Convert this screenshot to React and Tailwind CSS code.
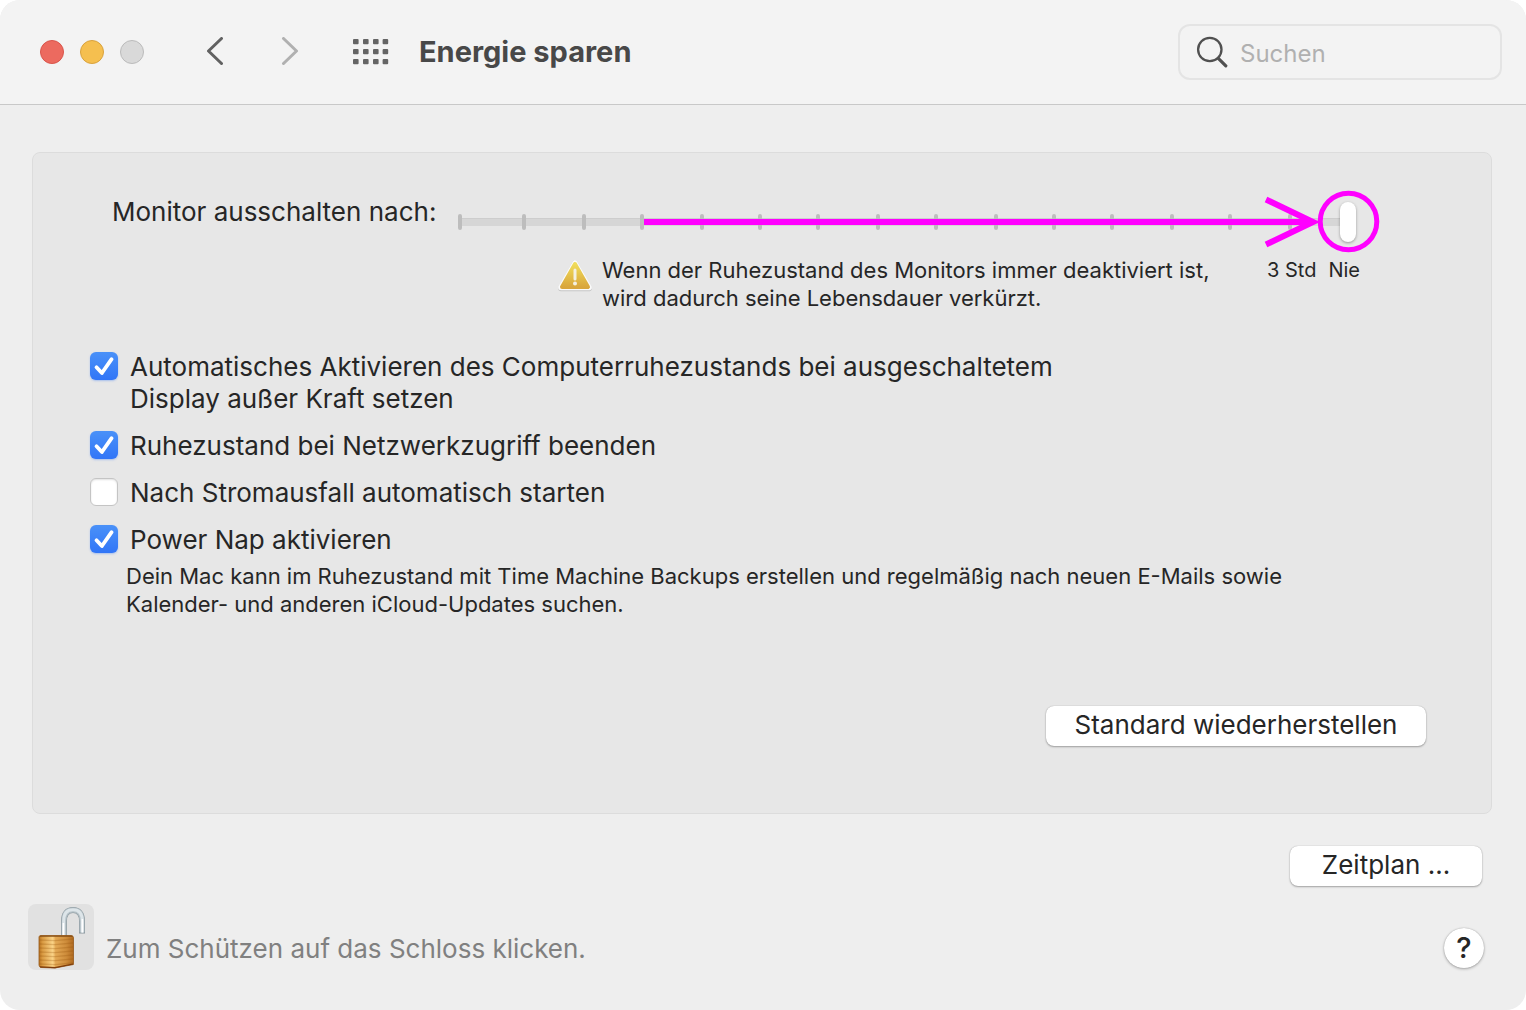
import { useState } from "react";

const TICKS = [2, 66, 126, 184, 244, 302, 360, 420, 478, 538, 596, 654, 714, 772, 832];

const BUTTON =
  "rounded-lg bg-white pb-0.5 text-[26px] leading-8 shadow-[0_0_1px_rgba(0,0,0,0.3),0_1px_2px_rgba(0,0,0,0.3)]";

function Check({ label, checked, onChange }) {
  return (
    <label className="flex items-start gap-3 text-[26px] leading-8">
      <span className="grid h-[30px] w-7 shrink-0 place-items-center">
        <input
          type="checkbox"
          checked={checked}
          onChange={onChange}
          className="peer col-start-1 row-start-1 size-7 appearance-none rounded-md border border-[#c4c4c4] bg-white shadow-[inset_0_1px_2px_rgba(0,0,0,0.12)] checked:border-0 checked:bg-linear-to-b checked:from-[#4a91f8] checked:to-[#3175f7] checked:shadow-[0_1px_2px_rgba(49,117,247,0.35)]"
        />
        <svg
          viewBox="0 0 28 28"
          className="pointer-events-none col-start-1 row-start-1 hidden size-7 peer-checked:block"
          fill="none"
          stroke="white"
          strokeWidth="3.8"
          strokeLinecap="round"
          strokeLinejoin="round"
          aria-hidden="true"
        >
          <path d="M6.5 15.3 L11.9 21 L21.6 7.2" />
        </svg>
      </span>
      <span className="whitespace-pre-line">{label}</span>
    </label>
  );
}

function Slider() {
  const [value, setValue] = useState(15);
  return (
    <div className="relative h-[60px] w-[898px] shrink-0">
      <svg className="absolute inset-0" width="898" height="60" aria-hidden="true">
        <rect x="0" y="26" width="898" height="8" rx="3" fill="#d6d6d6" />
        <rect x="0" y="26" width="898" height="1" fill="#cdcdcd" />
        {TICKS.map((x) => (
          <rect key={x} x={x - 2} y="22" width="4" height="16" rx="2" fill="#bdbdbd" />
        ))}
      </svg>
      <input
        id="display-off"
        type="range"
        min="0"
        max="15"
        value={value}
        onChange={(e) => setValue(Number(e.target.value))}
        className="absolute inset-0 h-full w-full appearance-none bg-transparent [&::-webkit-slider-thumb]:h-10 [&::-webkit-slider-thumb]:w-4 [&::-webkit-slider-thumb]:appearance-none [&::-webkit-slider-thumb]:rounded-full [&::-webkit-slider-thumb]:bg-white [&::-webkit-slider-thumb]:shadow-[0_1px_3px_rgba(0,0,0,0.35)]"
      />
      <svg
        className="pointer-events-none absolute inset-0 overflow-visible"
        width="898"
        height="60"
        fill="none"
        stroke="#ff00ff"
        aria-hidden="true"
      >
        <path d="M186 30 H852" strokeWidth="6" />
        <path d="M808 7.5 L855 30 L808 52.5" strokeWidth="6" strokeLinejoin="miter" />
        <circle cx="890.5" cy="29.5" r="28.3" strokeWidth="5" />
      </svg>
    </div>
  );
}

function Lock() {
  return (
    <svg viewBox="0 0 66 66" className="size-full" fill="none" aria-hidden="true">
      <defs>
        <linearGradient id="brass" x1="0" x2="1">
          <stop offset="0" stopColor="#b87322" />
          <stop offset="0.1" stopColor="#d99a42" />
          <stop offset="0.4" stopColor="#fbd488" />
          <stop offset="0.48" stopColor="#e3a854" />
          <stop offset="0.8" stopColor="#cd8b3a" />
          <stop offset="1" stopColor="#b06a20" />
        </linearGradient>
      </defs>
      <path d="M36 33 V17 C36 9.5 39.5 6 45 6 C50.5 6 54 9.5 54 17 V29.4" stroke="#8b989e" strokeWidth="6" />
      <path d="M36 33 V17 C36 9.5 39.5 6 45 6 C50.5 6 54 9.5 54 17 V28.6" stroke="#b3bfc5" strokeWidth="4.8" />
      <path d="M35.7 32 V17 C35.7 9.3 39.5 5.7 45 5.7 C50.7 5.7 54.3 9.3 54.3 17 V28.6" stroke="#dde5e9" strokeWidth="3" />
      <path d="M35.4 32 V19 M54.4 28.6 V15" stroke="#ffffff" strokeWidth="1.6" />
      <path
        d="M11 33 Q11 31.5 13 31.5 L43 31.5 Q45.5 31.5 45.5 34 V60.5 L27 64 L13 63.5 Q11 63 11 61 Z"
        fill="url(#brass)"
        stroke="#96581b"
        strokeWidth="0.8"
      />
      {[36, 40, 44, 48, 52, 56, 60].map((y) => (
        <path
          key={y}
          d={`M11.5 ${y} L27 ${y + 0.6} L45 ${y - 1}`}
          stroke="#96550f"
          strokeOpacity="0.28"
          strokeWidth="1.4"
        />
      ))}
      <path d="M12 32.2 H44.5" stroke="#7d4812" strokeWidth="1" />
      <path d="M12 62.8 L27 63.6 L45 60" stroke="#7d3c0c" strokeWidth="1.2" />
    </svg>
  );
}

export default function App() {
  const [options, setOptions] = useState([
    { label: "Automatisches Aktivieren des Computerruhezustands bei ausgeschaltetem\nDisplay außer Kraft setzen", on: true },
    { label: "Ruhezustand bei Netzwerkzugriff beenden", on: true },
    { label: "Nach Stromausfall automatisch starten", on: false },
    { label: "Power Nap aktivieren", on: true },
  ]);
  const toggle = (i) =>
    setOptions(options.map((o, n) => (n === i ? { ...o, on: !o.on } : o)));

  return (
    <div className="bg-white font-['Inter','Liberation_Sans',sans-serif] text-[#262626]">
      <div className="flex min-h-screen flex-col overflow-hidden rounded-[20px] bg-[#eeeeee]">
        <header className="flex h-[105px] items-center border-b border-[#c8c8c8] bg-[#f3f3f3] pr-6 pl-10">
          <div className="flex gap-4">
            <button aria-label="Schließen" className="size-6 rounded-full border border-[#d9554b] bg-[#ec6a5f]" />
            <button aria-label="Minimieren" className="size-6 rounded-full border border-[#d9a23d] bg-[#f5bf4f]" />
            <button aria-label="Vergrößern" className="size-6 rounded-full border border-[#bbbbbb] bg-[#d9d9d9]" />
          </div>
          <nav className="ml-[60px] flex items-center">
            <button aria-label="Zurück">
              <svg width="22" height="30" fill="none" stroke="#616161" strokeWidth="3" strokeLinecap="round" strokeLinejoin="round">
                <path d="M17.5 1.5 L4.5 14 L17.5 26.5" />
              </svg>
            </button>
            <button aria-label="Vorwärts" className="ml-[53px]">
              <svg width="22" height="30" fill="none" stroke="#b0b0b0" strokeWidth="3" strokeLinecap="round" strokeLinejoin="round">
                <path d="M4.5 1.5 L17.5 14 L4.5 26.5" />
              </svg>
            </button>
            <button aria-label="Alle einblenden" className="ml-[52px]">
              <svg width="36" height="26" fill="#646464">
                {[0, 10, 20, 29.6].map((x) =>
                  [0, 10, 20].map((y) => <rect key={`${x}-${y}`} x={x} y={y} width="5.6" height="5.2" rx="1" />)
                )}
              </svg>
            </button>
          </nav>
          <h1 className="ml-[30px] text-[29px] leading-9 font-bold text-[#484848]">Energie sparen</h1>
          <label className="ml-auto flex h-14 w-[324px] items-center gap-3 rounded-xl border-2 border-[#e4e4e4] px-4">
            <svg width="32" height="32" fill="none" stroke="#505050" className="shrink-0" aria-hidden="true">
              <circle cx="13.8" cy="13.5" r="11.7" strokeWidth="2.3" />
              <path d="M22.3 22.3 L29.8 29.8" strokeWidth="3.2" strokeLinecap="round" />
            </svg>
            <input
              type="search"
              aria-label="Suchen"
              placeholder="Suchen"
              className="min-w-0 flex-1 bg-transparent pt-1 text-[24px] leading-8 outline-none placeholder:text-[#b0b0b0]"
            />
          </label>
        </header>

        <main className="mt-[47px] mr-[34px] ml-8 rounded-lg border border-[#dcdcdc] bg-[#e7e7e7] pt-[39px] pr-[65px] pb-[67px] pl-[57px]">
          <div className="flex items-start">
            <label htmlFor="display-off" className="w-[368px] shrink-0 pt-1 pl-[22px] text-[26px] leading-8">
              Monitor ausschalten nach:
            </label>
            <Slider />
          </div>
          <div className="mt-1 flex items-start text-[22px] leading-7">
            <svg width="36" height="36" className="ml-[467px] shrink-0" aria-hidden="true">
              <defs>
                <linearGradient id="warn" x1="0" y1="0" x2="0" y2="1">
                  <stop offset="0" stopColor="#f0dc5a" />
                  <stop offset="1" stopColor="#d9a63c" />
                </linearGradient>
              </defs>
              <path d="M18 7 L32 32.5 H4 Z" fill="#c4c4c4" stroke="#c4c4c4" strokeWidth="5.5" strokeLinejoin="round" />
              <path d="M18 7 L32 31.5 H4 Z" fill="#fafafa" stroke="#fafafa" strokeWidth="5.5" strokeLinejoin="round" />
              <path d="M18 8 L31 31 H5 Z" fill="url(#warn)" stroke="url(#warn)" strokeWidth="4" strokeLinejoin="round" />
              <path d="M18 14 V23" stroke="#f4f0e2" strokeWidth="3" strokeLinecap="round" />
              <circle cx="18" cy="27.6" r="2" fill="#f4f0e2" />
            </svg>
            <p className="ml-[9px]">
              Wenn der Ruhezustand des Monitors immer deaktiviert ist,
              <br />
              wird dadurch seine Lebensdauer verkürzt.
            </p>
            <div className="mr-[66px] ml-auto flex gap-3 text-[20px]">
              <span>3 Std</span>
              <span>Nie</span>
            </div>
          </div>

          <div className="mt-[39px] flex flex-col gap-[15px]">
            {options.map((o, i) => (
              <Check key={o.label} label={o.label} checked={o.on} onChange={() => toggle(i)} />
            ))}
          </div>
          <p className="mt-1.5 ml-9 text-[22px] leading-7">
            Dein Mac kann im Ruhezustand mit Time Machine Backups erstellen und regelmäßig nach neuen E-Mails sowie
            <br />
            Kalender- und anderen iCloud-Updates suchen.
          </p>
          <div className="mt-[88px] flex justify-end">
            <button className={`${BUTTON} h-10 w-[380px]`}>Standard wiederherstellen</button>
          </div>
        </main>

        <div className="mt-8 mr-11 flex justify-end">
          <button className={`${BUTTON} h-10 w-48`}>Zeitplan ...</button>
        </div>
        <footer className="mt-[18px] mr-[42px] ml-7 flex items-center pb-10">
          <button aria-label="Schloss" className="size-[66px] shrink-0 rounded-lg bg-[#e1e1e1]">
            <Lock />
          </button>
          <p className="ml-3 pt-6 text-[26px] leading-8 text-[#808080]">Zum Schützen auf das Schloss klicken.</p>
          <button
            aria-label="Hilfe"
            className="mt-[22px] ml-auto size-10 rounded-full bg-white text-[29px] leading-10 font-medium shadow-[0_0_1px_rgba(0,0,0,0.3),0_1px_3px_rgba(0,0,0,0.3)]"
          >
            ?
          </button>
        </footer>
      </div>
    </div>
  );
}
